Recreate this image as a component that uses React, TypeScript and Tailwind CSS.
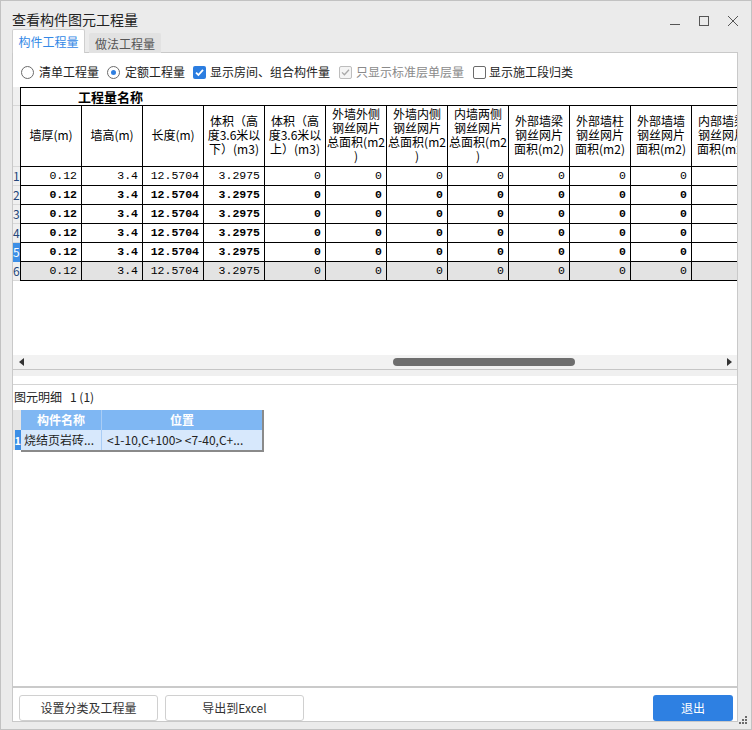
import { useState } from 'react';

interface Col {
  lines: string[];
}

const cols: Col[] = [
  { lines: ['墙厚(m)'] },
  { lines: ['墙高(m)'] },
  { lines: ['长度(m)'] },
  { lines: ['体积（高', '度3.6米以', '下）(m3)'] },
  { lines: ['体积（高', '度3.6米以', '上）(m3)'] },
  { lines: ['外墙外侧', '钢丝网片', '总面积(m2', ')'] },
  { lines: ['外墙内侧', '钢丝网片', '总面积(m2', ')'] },
  { lines: ['内墙两侧', '钢丝网片', '总面积(m2', ')'] },
  { lines: ['外部墙梁', '钢丝网片', '面积(m2)'] },
  { lines: ['外部墙柱', '钢丝网片', '面积(m2)'] },
  { lines: ['外部墙墙', '钢丝网片', '面积(m2)'] },
  { lines: ['内部墙梁', '钢丝网片', '面积(m2)'] },
];

const values = ['0.12', '3.4', '12.5704', '3.2975', '0', '0', '0', '0', '0', '0', '0', '0'];

const rows = [
  { n: 1, bold: false, gray: false },
  { n: 2, bold: true, gray: false },
  { n: 3, bold: true, gray: false },
  { n: 4, bold: true, gray: false },
  { n: 5, bold: true, gray: false },
  { n: 6, bold: false, gray: true },
];

const ui = "font-['Noto_Sans_CJK_SC','Noto_Sans',sans-serif]";

function Radio({ checked }: { checked?: boolean }) {
  return (
    <span className="w-[13px] h-[13px] rounded-full border border-[#6b6b6b] bg-white flex items-center justify-center shrink-0">
      {checked && <span className="w-[5px] h-[5px] rounded-full bg-[#2f7fe0]" />}
    </span>
  );
}

function Check({ state }: { state: 'on' | 'off' | 'disabled' }) {
  if (state === 'on') {
    return (
      <span className="w-[13px] h-[13px] rounded-[2px] bg-[#2b7de0] flex items-center justify-center shrink-0">
        <svg width="11" height="11" viewBox="0 0 11 11">
          <path d="M2 5.6 L4.4 8 L9 2.8" fill="none" stroke="white" strokeWidth="1.8" />
        </svg>
      </span>
    );
  }
  if (state === 'disabled') {
    return (
      <span className="w-[13px] h-[13px] rounded-[2px] border border-[#bdbdbd] bg-[#f4f4f4] flex items-center justify-center shrink-0">
        <svg width="11" height="11" viewBox="0 0 11 11">
          <path d="M2 5.4 L4.4 7.8 L9 2.8" fill="none" stroke="#a8a8a8" strokeWidth="1.3" />
        </svg>
      </span>
    );
  }
  return <span className="block w-[13px] h-[13px] rounded-[2px] border border-[#6b6b6b] bg-white shrink-0" />;
}

export default function App() {
  const [tab, setTab] = useState(0);

  return (
    <div className={`w-[752px] h-[730px] bg-[#ebebeb] border border-[#c2c2c2] flex flex-col relative overflow-hidden ${ui}`}>
      {/* title bar */}
      <div className="h-[28px] flex items-end justify-between shrink-0">
        <div className="pl-[11px] text-[14px] leading-[20px] text-[#222]">查看构件图元工程量</div>
        <div className="flex items-center gap-[17px] pr-[12px] mb-[2px] text-[#555]">
          <svg width="12" height="12" viewBox="0 0 12 12">
            <path d="M1 9.5 H11" stroke="#555" strokeWidth="1" />
          </svg>
          <svg width="12" height="12" viewBox="0 0 12 12">
            <rect x="1.5" y="1.5" width="9" height="9" fill="none" stroke="#555" strokeWidth="1" />
          </svg>
          <svg width="12" height="12" viewBox="0 0 12 12">
            <path d="M1 1 L11 11 M11 1 L1 11" stroke="#555" strokeWidth="1" />
          </svg>
        </div>
      </div>

      {/* tabs */}
      <div className="h-[24px] flex items-end pl-[11px] gap-[4px] shrink-0 relative z-10">
        <button
          onClick={() => setTab(0)}
          className={`w-[73px] text-[12px] rounded-t-[2px] border border-b-0 ${tab === 0 ? 'h-[24px] bg-white border-[#cfcfcf] text-[#3388e6]' : 'h-[20px] bg-[#e2e2e2] border-[#e2e2e2] text-[#555]'}`}
        >
          构件工程量
        </button>
        <button
          onClick={() => setTab(1)}
          className={`w-[72px] text-[12px] rounded-t-[2px] border border-b-0 ${tab === 1 ? 'h-[24px] bg-white border-[#cfcfcf] text-[#3388e6]' : 'h-[20px] bg-[#e2e2e2] border-[#e2e2e2] text-[#555]'}`}
        >
          做法工程量
        </button>
      </div>

      {/* main panel */}
      <div className="ml-[11px] w-[726px] h-[670px] -mt-px bg-white border border-[#c9c9c9] flex flex-col overflow-hidden">
        {/* options */}
        <div className="mt-[8px] h-[22px] flex items-center pl-[8px] text-[12px] text-[#222] shrink-0">
          <Radio />
          <span className="ml-[5px]">清单工程量</span>
          <span className="ml-[8px]"><Radio checked /></span>
          <span className="ml-[5px]">定额工程量</span>
          <span className="ml-[8px]"><Check state="on" /></span>
          <span className="ml-[4px]">显示房间、组合构件量</span>
          <span className="ml-[9px]"><Check state="disabled" /></span>
          <span className="ml-[4px] text-[#8a8a8a]">只显示标准层单层量</span>
          <span className="ml-[9px]"><Check state="off" /></span>
          <span className="ml-[3px]">显示施工段归类</span>
        </div>

        {/* quantity grid */}
        <div className="mt-[4px] flex flex-col shrink-0">
          <div className="flex h-[19px]">
            <div className="w-[7px] shrink-0 bg-[#f0f0f0] border-b border-[#d8d8d8]" />
            <div className="flex-1 border-t border-b border-l border-black pl-[57px] text-[13px] font-bold leading-[17px] text-black whitespace-nowrap">
              工程量名称
            </div>
          </div>
          <div className="flex h-[61px]">
            <div className="w-[7px] shrink-0 bg-[#f0f0f0] border-b border-[#d8d8d8]" />
            <div className="flex border-l border-black">
              {cols.map((c, i) => (
                <div
                  key={i}
                  className="w-[61px] shrink-0 h-[61px] border-r border-b border-black flex flex-col items-center justify-center text-[12px] leading-[14px] text-black whitespace-nowrap overflow-hidden pb-[3px]"
                >
                  {c.lines.map((l, j) => (
                    <span key={j} className="block h-[14px]">{l}</span>
                  ))}
                </div>
              ))}
            </div>
          </div>
          {rows.map((r) => (
            <div key={r.n} className="flex h-[19px]">
              <div
                className={`w-[7px] shrink-0 text-[12px] leading-[18px] overflow-hidden border-b ${r.n === 5 ? 'bg-[#3d8fe6] text-white border-[#3d8fe6]' : 'bg-[#f0f0f0] text-[#23467a] border-[#d8d8d8]'}`}
              >
                {r.n}
              </div>
              <div className={`flex border-l border-black ${r.gray ? 'bg-[#e3e3e3]' : 'bg-white'}`}>
                {values.map((v, i) => (
                  <div
                    key={i}
                    className={`w-[61px] shrink-0 h-[19px] border-r border-b border-black text-right pr-[4px] text-[11.5px] leading-[18px] text-black font-['Liberation_Mono',monospace] ${r.bold ? 'font-bold' : ''}`}
                  >
                    {v}
                  </div>
                ))}
              </div>
            </div>
          ))}
        </div>

        <div className="h-[74px] shrink-0" />

        {/* horizontal scrollbar */}
        <div className="h-[15px] shrink-0 bg-[#f2f2f2] border-b border-[#c6c6c6] relative flex items-center">
          <svg width="6" height="8" viewBox="0 0 6 8" className="ml-[6px]">
            <path d="M5 0 L0 4 L5 8 Z" fill="#333" />
          </svg>
          <div className="ml-[368px] w-[182px] h-[8px] rounded-full bg-[#6e6e6e]" />
          <svg width="6" height="8" viewBox="0 0 6 8" className="ml-auto mr-[5px]">
            <path d="M1 0 L6 4 L1 8 Z" fill="#333" />
          </svg>
        </div>
        <div className="h-[6px] shrink-0 bg-[#f0f0f0]" />
        <div className="h-[8px] shrink-0 bg-white" />

        {/* detail panel */}
        <div className="flex-1 border-t border-[#d4d4d4] flex flex-col">
          <div className="h-[24px] flex items-center pl-px text-[12px] text-[#222] shrink-0">
            <span>图元明细</span>
            <span className="ml-[8px]">1 (1)</span>
          </div>
          <div className="mt-[1px] flex flex-col w-[251px]">
            <div className="flex h-[20px]">
              <div className="w-[8px] bg-[#e6e6e6]" />
              <div className="w-[81px] bg-[#7fb7f3] border-r border-[#a9cdf5] text-white font-bold text-[12px] leading-[20px] text-center">构件名称</div>
              <div className="w-[160px] bg-[#7fb7f3] text-white font-bold text-[12px] leading-[20px] text-center">位置</div>
              <div className="w-[2px] bg-[#8a8a8a]" />
            </div>
            <div className="flex h-[20px]">
              <div className="w-[8px] flex">
                <div className="w-[2px] bg-[#e6e6e6]" />
                <div className="flex-1 bg-[#3d8fe6] text-white text-[11px] font-bold leading-[20px]">1</div>
              </div>
              <div className="w-[81px] bg-[#d7e8fc] border-r border-[#a9cdf5] text-[#222] text-[12px] leading-[20px] pl-[3px] whitespace-nowrap overflow-hidden">烧结页岩砖...</div>
              <div className="w-[160px] bg-[#d7e8fc] text-[#222] text-[12px] leading-[20px] pl-[5px] whitespace-nowrap overflow-hidden">&lt;1-10,C+100&gt; &lt;7-40,C+...</div>
              <div className="w-[2px] bg-[#8a8a8a]" />
            </div>
            <div className="h-[2px] bg-[#8a8a8a] ml-[8px]" />
          </div>
          <div className="flex-1" />
          <div className="h-[2px] bg-[#cacaca]" />
          <div className="h-[33px] flex items-end pl-[6px] pr-[4px] text-[12px]">
            <button className="w-[139px] h-[26px] border border-[#d0d0d0] rounded-[3px] bg-white text-[#333]">设置分类及工程量</button>
            <button className="ml-[7px] w-[139px] h-[26px] border border-[#d0d0d0] rounded-[3px] bg-white text-[#333]">导出到Excel</button>
            <button className="ml-auto w-[80px] h-[26px] rounded-[3px] bg-[#2e80e2] text-white">退出</button>
          </div>
        </div>
      </div>

      {/* resize grip */}
      <svg width="10" height="10" viewBox="0 0 10 10" className="absolute right-[3px] bottom-[4px]">
        <rect x="7" y="1" width="2" height="2" fill="#6c6c6c" />
        <rect x="4" y="4" width="2" height="2" fill="#6c6c6c" />
        <rect x="7" y="4" width="2" height="2" fill="#6c6c6c" />
        <rect x="1" y="7" width="2" height="2" fill="#6c6c6c" />
        <rect x="4" y="7" width="2" height="2" fill="#6c6c6c" />
        <rect x="7" y="7" width="2" height="2" fill="#6c6c6c" />
      </svg>
    </div>
  );
}
